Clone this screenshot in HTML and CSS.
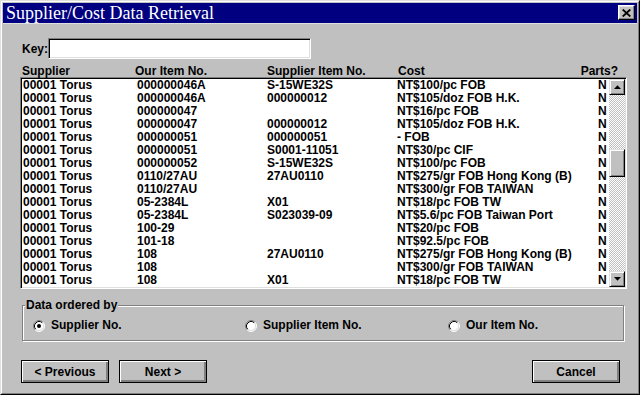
FILE: index.html
```html
<!DOCTYPE html>
<html lang="en">
<head>
    <meta charset="UTF-8">
    <title>Supplier/Cost Data Retrieval</title>
    <link rel="stylesheet" href="styles.css">
</head>
<body>
    <div class="window">
        <div class="window-inner">
            <div class="titlebar">
                <span class="title">Supplier/Cost Data Retrieval</span>
                <button class="close-btn" type="button">
                    <svg width="9" height="8" viewBox="0 0 9 8"><path d="M0.7 0.5l7.6 7M8.3 0.5L0.7 7.5" stroke="#000" stroke-width="1.8"/></svg>
                </button>
            </div>

            <div class="content">
                <div class="key-row">
                    <label class="key-label" for="key">Key:</label>
                    <input class="key-input" id="key" type="text">
                </div>

                <div class="list-head">
                    <span>Supplier</span>
                    <span>Our Item No.</span>
                    <span>Supplier Item No.</span>
                    <span>Cost</span>
                    <span>Parts?</span>
                </div>

                <div class="list">
                    <div class="rows">
                        <div class="row"><span>00001 Torus</span><span>000000046A</span><span>S-15WE32S</span><span>NT$100/pc FOB</span><span>N</span></div>
                        <div class="row"><span>00001 Torus</span><span>000000046A</span><span>000000012</span><span>NT$105/doz FOB H.K.</span><span>N</span></div>
                        <div class="row"><span>00001 Torus</span><span>000000047</span><span></span><span>NT$16/pc FOB</span><span>N</span></div>
                        <div class="row"><span>00001 Torus</span><span>000000047</span><span>000000012</span><span>NT$105/doz FOB H.K.</span><span>N</span></div>
                        <div class="row"><span>00001 Torus</span><span>000000051</span><span>000000051</span><span>- FOB</span><span>N</span></div>
                        <div class="row"><span>00001 Torus</span><span>000000051</span><span>S0001-11051</span><span>NT$30/pc CIF</span><span>N</span></div>
                        <div class="row"><span>00001 Torus</span><span>000000052</span><span>S-15WE32S</span><span>NT$100/pc FOB</span><span>N</span></div>
                        <div class="row"><span>00001 Torus</span><span>0110/27AU</span><span>27AU0110</span><span>NT$275/gr FOB Hong Kong (B)</span><span>N</span></div>
                        <div class="row"><span>00001 Torus</span><span>0110/27AU</span><span></span><span>NT$300/gr FOB TAIWAN</span><span>N</span></div>
                        <div class="row"><span>00001 Torus</span><span>05-2384L</span><span>X01</span><span>NT$18/pc FOB TW</span><span>N</span></div>
                        <div class="row"><span>00001 Torus</span><span>05-2384L</span><span>S023039-09</span><span>NT$5.6/pc FOB Taiwan Port</span><span>N</span></div>
                        <div class="row"><span>00001 Torus</span><span>100-29</span><span></span><span>NT$20/pc FOB</span><span>N</span></div>
                        <div class="row"><span>00001 Torus</span><span>101-18</span><span></span><span>NT$92.5/pc FOB</span><span>N</span></div>
                        <div class="row"><span>00001 Torus</span><span>108</span><span>27AU0110</span><span>NT$275/gr FOB Hong Kong (B)</span><span>N</span></div>
                        <div class="row"><span>00001 Torus</span><span>108</span><span></span><span>NT$300/gr FOB TAIWAN</span><span>N</span></div>
                        <div class="row"><span>00001 Torus</span><span>108</span><span>X01</span><span>NT$18/pc FOB TW</span><span>N</span></div>
                    </div>
                    <div class="scrollbar">
                        <div class="scroll-btn">
                            <svg width="7" height="4" viewBox="0 0 7 4"><polygon points="0,4 7,4 3.5,0.3" fill="#000"/></svg>
                        </div>
                        <div class="track">
                            <div class="thumb"></div>
                        </div>
                        <div class="scroll-btn">
                            <svg width="7" height="4" viewBox="0 0 7 4"><polygon points="0,0 7,0 3.5,3.7" fill="#000"/></svg>
                        </div>
                    </div>
                </div>

                <fieldset class="group">
                    <legend>Data ordered by</legend>
                    <div class="radios">
                        <label class="radio">
                            <svg class="dot" width="12" height="12" viewBox="0 0 12 12">
                                <circle cx="6" cy="6" r="5" fill="#fff"/>
                                <path d="M2.11 9.89A5.5 5.5 0 0 1 9.89 2.11" fill="none" stroke="#808080"/>
                                <path d="M9.89 2.11A5.5 5.5 0 0 1 2.11 9.89" fill="none" stroke="#fff"/>
                                <path d="M2.82 9.18A4.5 4.5 0 0 1 9.18 2.82" fill="none" stroke="#000"/>
                                <path d="M9.18 2.82A4.5 4.5 0 0 1 2.82 9.18" fill="none" stroke="#dfdfdf"/>
                                <circle cx="6" cy="6" r="2" fill="#000"/>
                            </svg>
                            Supplier No.
                        </label>
                        <label class="radio">
                            <svg class="dot" width="12" height="12" viewBox="0 0 12 12">
                                <circle cx="6" cy="6" r="5" fill="#fff"/>
                                <path d="M2.11 9.89A5.5 5.5 0 0 1 9.89 2.11" fill="none" stroke="#808080"/>
                                <path d="M9.89 2.11A5.5 5.5 0 0 1 2.11 9.89" fill="none" stroke="#fff"/>
                                <path d="M2.82 9.18A4.5 4.5 0 0 1 9.18 2.82" fill="none" stroke="#000"/>
                                <path d="M9.18 2.82A4.5 4.5 0 0 1 2.82 9.18" fill="none" stroke="#dfdfdf"/>
                            </svg>
                            Supplier Item No.
                        </label>
                        <label class="radio">
                            <svg class="dot" width="12" height="12" viewBox="0 0 12 12">
                                <circle cx="6" cy="6" r="5" fill="#fff"/>
                                <path d="M2.11 9.89A5.5 5.5 0 0 1 9.89 2.11" fill="none" stroke="#808080"/>
                                <path d="M9.89 2.11A5.5 5.5 0 0 1 2.11 9.89" fill="none" stroke="#fff"/>
                                <path d="M2.82 9.18A4.5 4.5 0 0 1 9.18 2.82" fill="none" stroke="#000"/>
                                <path d="M9.18 2.82A4.5 4.5 0 0 1 2.82 9.18" fill="none" stroke="#dfdfdf"/>
                            </svg>
                            Our Item No.
                        </label>
                    </div>
                </fieldset>

                <div class="buttons">
                    <button class="btn" type="button">&lt; Previous</button>
                    <button class="btn next" type="button">Next &gt;</button>
                    <button class="btn cancel" type="button">Cancel</button>
                </div>
            </div>
        </div>
    </div>
</body>
</html>
```

FILE: styles.css
```css
* {
    box-sizing: border-box;
}
body {
    margin: 0;
    background: #c0c0c0;
    font-family: "Liberation Sans", Arial, sans-serif;
    font-size: 12px;
    font-weight: bold;
    color: #000;
}
.window {
    width: 640px;
    height: 395px;
    border: 1px solid;
    border-color: #dfdfdf #000 #000 #dfdfdf;
    background: #c0c0c0;
}
.window-inner {
    height: 100%;
    border: 1px solid;
    border-color: #fff #808080 #808080 #fff;
    padding: 1px;
    display: flex;
    flex-direction: column;
}
.titlebar {
    height: 21px;
    background: #000080;
    border-bottom: 1px solid #dfdfdf;
    color: #fff;
    display: flex;
    align-items: center;
    justify-content: space-between;
    padding: 0 2px 0 3px;
}
.title {
    font-family: "Liberation Serif", "Times New Roman", serif;
    font-size: 18px;
    font-weight: normal;
    line-height: 20px;
}
.close-btn {
    width: 17px;
    height: 15px;
    padding: 0;
    margin-top: -1px;
    background: #c0c0c0;
    border: 1px solid;
    border-color: #fff #000 #000 #fff;
    box-shadow: inset -1px -1px #808080, inset 1px 1px #dfdfdf;
    display: flex;
    align-items: center;
    justify-content: center;
}
.content {
    flex: 1;
    padding: 14px 10px 0 17px;
}
.key-row {
    display: flex;
    align-items: center;
    height: 21px;
}
.key-label {
    width: 26px;
    margin-left: 2px;
}
.key-input {
    width: 263px;
    height: 21px;
    margin: 0;
    background: #fff;
    border: 1px solid;
    border-color: #808080 #fff #fff #808080;
    box-shadow: inset 1px 1px #000, inset -1px -1px #dfdfdf;
    outline: none;
}
.list-head {
    display: grid;
    grid-template-columns: 113px 132px 131px 1fr auto;
    margin-top: 6px;
    padding: 0 9px 0 2px;
    line-height: 12px;
    height: 12px;
}
.list {
    display: flex;
    height: 212px;
    background: #fff;
    border: 1px solid;
    border-color: #808080 #fff #fff #808080;
    box-shadow: inset 1px 1px #000, inset -1px -1px #dfdfdf;
    padding: 1px;
}
.rows {
    flex: 1;
}
.row {
    display: grid;
    grid-template-columns: 114px 130px 130px 201px 1fr;
    padding-left: 1px;
    height: 13px;
    line-height: 13px;
    white-space: nowrap;
}
.scrollbar {
    width: 16px;
    display: flex;
    flex-direction: column;
}
.scroll-btn, .thumb {
    background: #c0c0c0;
    border: 1px solid;
    border-color: #dfdfdf #000 #000 #dfdfdf;
    box-shadow: inset 1px 1px #fff, inset -1px -1px #808080;
}
.scroll-btn {
    height: 16px;
    display: flex;
    align-items: center;
    justify-content: center;
}
.track {
    flex: 1;
    background: repeating-conic-gradient(#c0c0c0 0 25%, #fff 0 50%) 0 0 / 2px 2px;
}
.thumb {
    height: 28px;
    margin-top: 54px;
}
.group {
    margin: 10px 3px 0 2px;
    padding: 7px 10px 8px 10px;
    border: 1px solid #808080;
    box-shadow: inset 1px 1px #fff, 1px 1px #fff;
    min-width: 0;
}
.group legend {
    padding: 0 1px;
    margin-left: -8px;
    line-height: 13px;
    background: #c0c0c0;
}
.radios {
    display: grid;
    grid-template-columns: 212px 203px 1fr;
    line-height: 13px;
}
.radio {
    display: flex;
    align-items: center;
    gap: 6px;
}
.dot {
    flex: none;
}
.buttons {
    display: flex;
    margin-top: 19px;
    padding-left: 1px;
}
.btn {
    width: 88px;
    height: 23px;
    padding: 0;
    font: inherit;
    color: #000;
    background: #c0c0c0;
    border: 1px solid #000;
    box-shadow: inset 1px 1px #fff, inset -2px -2px #808080;
}
.next {
    margin-left: 10px;
}
.cancel {
    margin-left: auto;
    margin-right: 7px;
}
```
